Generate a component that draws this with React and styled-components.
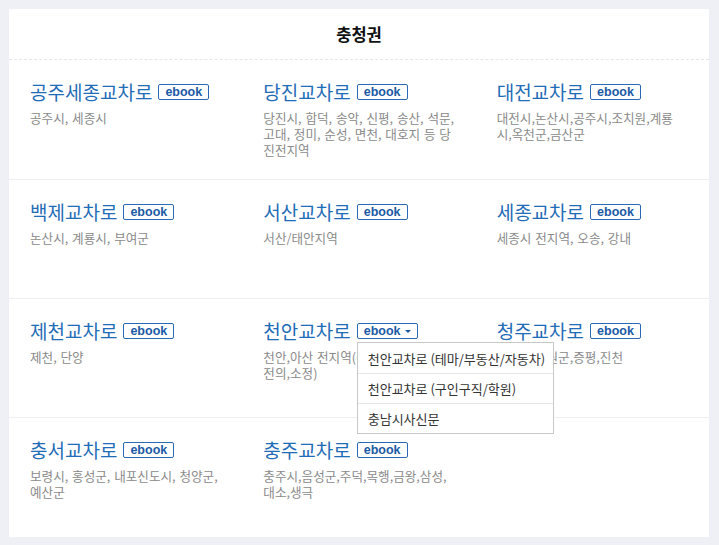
import React from 'react';
import styled, { createGlobalStyle } from 'styled-components';

const GlobalStyle = createGlobalStyle`
  html, body {
    margin: 0;
    padding: 0;
    background: #eef0f5;
  }
  * {
    box-sizing: border-box;
  }
`;

const Page = styled.div`
  padding: 9px;
  font-family: "Noto Sans CJK KR", "Noto Sans", sans-serif;
`;

const Panel = styled.div`
  width: 700px;
  height: 528px;
  background: #fff;
`;

const Header = styled.div`
  height: 51px;
  display: flex;
  align-items: center;
  justify-content: center;
  border-bottom: 1px dashed #e6e6e6;
  font-size: 16.5px;
  font-weight: 700;
  color: #111;
`;

const Row = styled.div`
  display: grid;
  grid-template-columns: repeat(3, minmax(0, 1fr));
  height: ${props => props.h}px;
  border-bottom: ${props => props.last ? 'none' : '1px solid #efefef'};
`;

const Cell = styled.div`
  position: relative;
  min-width: 0;
  padding: 20px 0 0 21px;
`;

const TitleLine = styled.div`
  display: flex;
  align-items: center;
  gap: 6px;
  height: 24px;
`;

const Title = styled.span`
  font-size: 19px;
  line-height: 24px;
  color: #1f6cb7;
  white-space: nowrap;
`;

const BadgeWrap = styled.span`
  position: relative;
  display: inline-flex;
`;

const Badge = styled.span`
  display: inline-flex;
  align-items: center;
  gap: 4px;
  height: 16px;
  padding: 0 6px;
  border: 1px solid #2a69b3;
  border-radius: 2px;
  font-family: "Liberation Sans", Arial, sans-serif;
  font-weight: 700;
  font-size: 12.5px;
  line-height: 14px;
  color: #1b5aa5;
`;

const Caret = styled.span`
  width: 0;
  height: 0;
  border-left: 3px solid transparent;
  border-right: 3px solid transparent;
  border-top: 3px solid #1b5aa5;
  margin-top: 1px;
`;

const Menu = styled.div`
  position: absolute;
  top: 19px;
  left: 0;
  width: 197px;
  background: #fff;
  border: 1px solid #c8c8c8;
  z-index: 10;
`;

const MenuItem = styled.div`
  height: 30px;
  padding: 0 10px;
  display: flex;
  align-items: center;
  font-size: 13px;
  font-weight: 400;
  color: #333;
  white-space: nowrap;
  border-top: ${props => props.first ? 'none' : '1px solid #e6e6e6'};
`;

const Desc = styled.div`
  margin-top: 6px;
  white-space: pre-line;
  font-size: 12.6px;
  line-height: 16px;
  word-spacing: 1px;
  color: #8a8a8a;
`;

const rows = [
  {
    h: 120,
    items: [
      { name: '공주세종교차로', desc: '공주시, 세종시' },
      { name: '당진교차로', desc: '당진시, 합덕, 송악, 신평, 송산, 석문,\n고대, 정미, 순성, 면천, 대호지 등 당\n진전지역' },
      { name: '대전교차로', desc: '대전시,논산시,공주시,조치원,계룡\n시,옥천군,금산군' },
    ],
  },
  {
    h: 119,
    items: [
      { name: '백제교차로', desc: '논산시, 계룡시, 부여군' },
      { name: '서산교차로', desc: '서산/태안지역' },
      { name: '세종교차로', desc: '세종시 전지역, 오송, 강내' },
    ],
  },
  {
    h: 119,
    items: [
      { name: '제천교차로', desc: '제천, 단양' },
      {
        name: '천안교차로',
        desc: '천안,아산 전지역(성환,성거,입장,직산,\n전의,소정)',
        menu: ['천안교차로 (테마/부동산/자동차)', '천안교차로 (구인구직/학원)', '충남시사신문'],
      },
      { name: '청주교차로', desc: '청주시,청원군,증평,진천' },
    ],
  },
  {
    h: 118,
    last: true,
    items: [
      { name: '충서교차로', desc: '보령시, 홍성군, 내포신도시, 청양군,\n예산군' },
      { name: '충주교차로', desc: '충주시,음성군,주덕,목행,금왕,삼성,\n대소,생극' },
      null,
    ],
  },
];

export default function App() {
  return (
    <Page>
      <GlobalStyle />
      <Panel>
        <Header>충청권</Header>
        {rows.map((row, ri) => (
          <Row key={ri} h={row.h} last={row.last}>
            {row.items.map((item, ci) =>
              item ? (
                <Cell key={ci}>
                  <TitleLine>
                    <Title>{item.name}</Title>
                    <BadgeWrap>
                      <Badge>
                        ebook
                        {item.menu && <Caret />}
                      </Badge>
                      {item.menu && (
                        <Menu>
                          {item.menu.map((m, mi) => (
                            <MenuItem key={mi} first={mi === 0}>{m}</MenuItem>
                          ))}
                        </Menu>
                      )}
                    </BadgeWrap>
                  </TitleLine>
                  <Desc>{item.desc}</Desc>
                </Cell>
              ) : (
                <Cell key={ci} />
              )
            )}
          </Row>
        ))}
      </Panel>
    </Page>
  );
}
